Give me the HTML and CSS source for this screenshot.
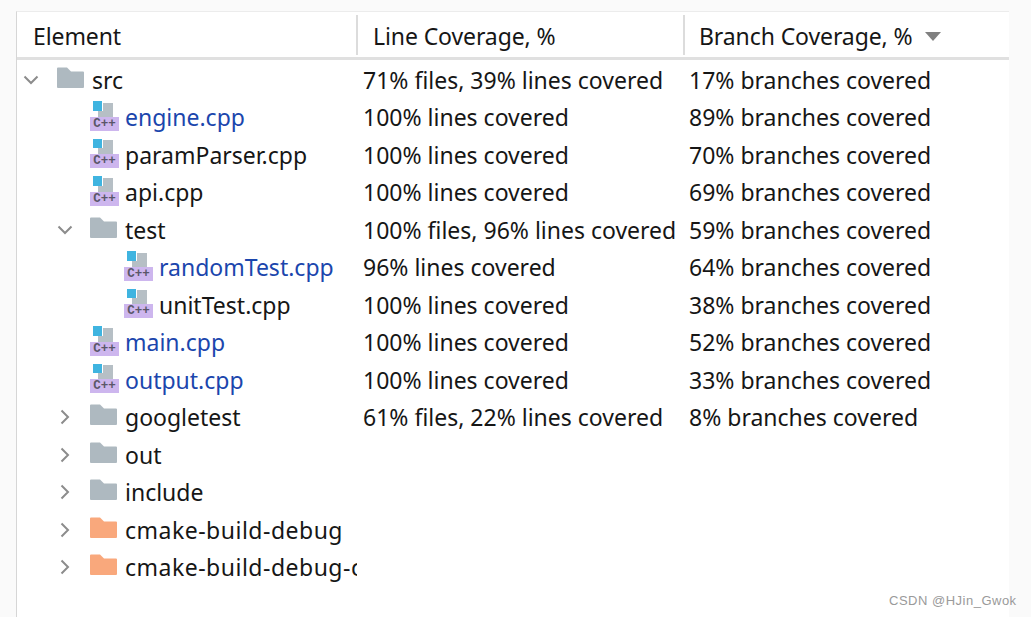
FILE: index.html
```html
<!DOCTYPE html>
<html lang="en">
<head>
  <meta charset="UTF-8" />
  <title>Coverage</title>
  <link rel="stylesheet" href="styles.css">
</head>
<body>
  <svg class="defs" width="0" height="0">
    <symbol id="folder" viewBox="0 0 27 21">
      <path d="M0 1.500a1 1 0 0 1 1-1h9l4 4h12a1 1 0 0 1 1 1V20a1 1 0 0 1-1 1H1a1 1 0 0 1-1-1z"/>
    </symbol>
    <symbol id="chevron-down" viewBox="0 0 16 16">
      <path d="M1.500 4.500 8 11l6.500-6.500" fill="none" stroke="#8c8c8c" stroke-width="2"/>
    </symbol>
    <symbol id="chevron-right" viewBox="0 0 16 16">
      <path d="M4.500 1.500 11 8l-6.500 6.500" fill="none" stroke="#8c8c8c" stroke-width="2"/>
    </symbol>
    <symbol id="cpp" viewBox="0 0 30 30">
      <rect x="8" y="2" width="15" height="14" fill="#b6bfc5"/>
      <rect x="2" y="-1" width="11" height="11" fill="white"/>
      <rect x="3" y="0" width="9" height="10" fill="#3fb4e0"/>
      <rect x="0" y="16" width="29" height="14" fill="#cdb6ee"/>
    </symbol>
  </svg>

  <div class="panel">
    <div class="head">
      <div class="head-cell col-name">Element</div>
      <div class="head-cell col-line">Line Coverage, %</div>
      <div class="head-cell col-branch">Branch Coverage, %<span class="sort"></span></div>
    </div>

    <div class="row">
      <div class="name lvl0"><svg class="chev"><use href="#chevron-down"/></svg><svg class="folder"><use href="#folder"/></svg><span>src</span></div>
      <div class="col-line">71% files, 39% lines covered</div>
      <div class="col-branch">17% branches covered</div>
    </div>
    <div class="row">
      <div class="name lvl1 file"><div class="cpp"><svg class="cpp-bg"><use href="#cpp"/></svg><span class="cpp-label">C++</span></div><span class="changed">engine.cpp</span></div>
      <div class="col-line">100% lines covered</div>
      <div class="col-branch">89% branches covered</div>
    </div>
    <div class="row">
      <div class="name lvl1 file"><div class="cpp"><svg class="cpp-bg"><use href="#cpp"/></svg><span class="cpp-label">C++</span></div><span>paramParser.cpp</span></div>
      <div class="col-line">100% lines covered</div>
      <div class="col-branch">70% branches covered</div>
    </div>
    <div class="row">
      <div class="name lvl1 file"><div class="cpp"><svg class="cpp-bg"><use href="#cpp"/></svg><span class="cpp-label">C++</span></div><span>api.cpp</span></div>
      <div class="col-line">100% lines covered</div>
      <div class="col-branch">69% branches covered</div>
    </div>
    <div class="row">
      <div class="name lvl1"><svg class="chev"><use href="#chevron-down"/></svg><svg class="folder"><use href="#folder"/></svg><span>test</span></div>
      <div class="col-line">100% files, 96% lines covered</div>
      <div class="col-branch">59% branches covered</div>
    </div>
    <div class="row">
      <div class="name lvl2 file"><div class="cpp"><svg class="cpp-bg"><use href="#cpp"/></svg><span class="cpp-label">C++</span></div><span class="changed">randomTest.cpp</span></div>
      <div class="col-line">96% lines covered</div>
      <div class="col-branch">64% branches covered</div>
    </div>
    <div class="row">
      <div class="name lvl2 file"><div class="cpp"><svg class="cpp-bg"><use href="#cpp"/></svg><span class="cpp-label">C++</span></div><span>unitTest.cpp</span></div>
      <div class="col-line">100% lines covered</div>
      <div class="col-branch">38% branches covered</div>
    </div>
    <div class="row">
      <div class="name lvl1 file"><div class="cpp"><svg class="cpp-bg"><use href="#cpp"/></svg><span class="cpp-label">C++</span></div><span class="changed">main.cpp</span></div>
      <div class="col-line">100% lines covered</div>
      <div class="col-branch">52% branches covered</div>
    </div>
    <div class="row">
      <div class="name lvl1 file"><div class="cpp"><svg class="cpp-bg"><use href="#cpp"/></svg><span class="cpp-label">C++</span></div><span class="changed">output.cpp</span></div>
      <div class="col-line">100% lines covered</div>
      <div class="col-branch">33% branches covered</div>
    </div>
    <div class="row">
      <div class="name lvl1"><svg class="chev"><use href="#chevron-right"/></svg><svg class="folder"><use href="#folder"/></svg><span>googletest</span></div>
      <div class="col-line">61% files, 22% lines covered</div>
      <div class="col-branch">8% branches covered</div>
    </div>
    <div class="row">
      <div class="name lvl1"><svg class="chev"><use href="#chevron-right"/></svg><svg class="folder"><use href="#folder"/></svg><span>out</span></div>
    </div>
    <div class="row">
      <div class="name lvl1"><svg class="chev"><use href="#chevron-right"/></svg><svg class="folder"><use href="#folder"/></svg><span>include</span></div>
    </div>
    <div class="row">
      <div class="name lvl1"><svg class="chev"><use href="#chevron-right"/></svg><svg class="folder excluded"><use href="#folder"/></svg><span class="wide">cmake-build-debug</span></div>
    </div>
    <div class="row">
      <div class="name lvl1"><svg class="chev"><use href="#chevron-right"/></svg><svg class="folder excluded"><use href="#folder"/></svg><span class="wide">cmake-build-debug-coverage</span></div>
    </div>
  </div>

  <div class="watermark">CSDN @HJin_Gwok</div>
</body>
</html>
```

FILE: styles.css
```css
html, body {
  margin: 0;
  height: 100%;
  overflow: hidden;
}
body {
  background: #fafafa;
  font-family: "Noto Sans", sans-serif;
  font-size: 23px;
  color: #161616;
}
.defs {
  position: absolute;
}
.panel {
  box-sizing: border-box;
  width: 993px;
  height: 606px;
  margin: 11px 0 0 16px;
  background: white;
  border-left: 1px solid #d6d6d6;
  border-top: 1px solid #ececec;
}
.head {
  display: flex;
  height: 45px;
  border-bottom: 3px solid #e0e0e0;
  margin-bottom: 1px;
}
.head-cell {
  display: flex;
  align-items: center;
  box-sizing: border-box;
  height: 40px;
  margin-top: 3px;
  padding-top: 2px;
  letter-spacing: -0.1px;
}
.col-name {
  width: 339px;
  padding-left: 16px;
}
.head .col-line {
  width: 327px;
  padding-left: 15px;
  border-left: 2px solid #dcdcdc;
}
.head .col-branch {
  flex: 1;
  padding-left: 14px;
  border-left: 2px solid #dcdcdc;
}
.sort {
  width: 0;
  height: 0;
  margin-left: 12px;
  border-left: 8px solid transparent;
  border-right: 8px solid transparent;
  border-top: 9px solid #808080;
}
.row {
  display: flex;
  align-items: center;
  height: 37.5px;
  white-space: nowrap;
}
.name {
  display: flex;
  align-items: center;
  box-sizing: border-box;
  width: 340px;
  overflow: hidden;
}
.row .col-line {
  width: 326px;
  padding-left: 6px;
  box-sizing: border-box;
}
.row .col-branch {
  padding-left: 6px;
}
.lvl0 { padding-left: 6px; }
.lvl1 { padding-left: 40px; }
.lvl1.file { padding-left: 73px; }
.lvl2.file { padding-left: 107px; }
.chev {
  width: 16px;
  height: 16px;
  margin-right: 17px;
  flex: none;
}
.lvl0 .chev {
  margin-right: 18px;
}
.folder {
  width: 27px;
  height: 21px;
  margin-right: 8px;
  margin-top: -5px;
  flex: none;
  fill: #aeb9c0;
}
.folder.excluded {
  fill: #f9a87c;
}
.cpp {
  position: relative;
  width: 30px;
  height: 30px;
  margin-right: 5px;
  margin-top: -3px;
  flex: none;
}
.cpp-bg {
  display: block;
  width: 30px;
  height: 30px;
}
.cpp-label {
  position: absolute;
  left: 0;
  width: 29px;
  bottom: 0;
  height: 14px;
  line-height: 14px;
  text-align: center;
  font-family: "Liberation Mono", monospace;
  font-size: 12.5px;
  font-weight: bold;
  color: #5a5668;
}
.changed {
  color: #1b46ad;
}
.wide {
  letter-spacing: 0.5px;
}
.watermark {
  position: absolute;
  left: 889px;
  top: 593px;
  font-family: "Liberation Sans", sans-serif;
  font-size: 13px;
  color: #9a9a9a;
  letter-spacing: 0.5px;
}
```
